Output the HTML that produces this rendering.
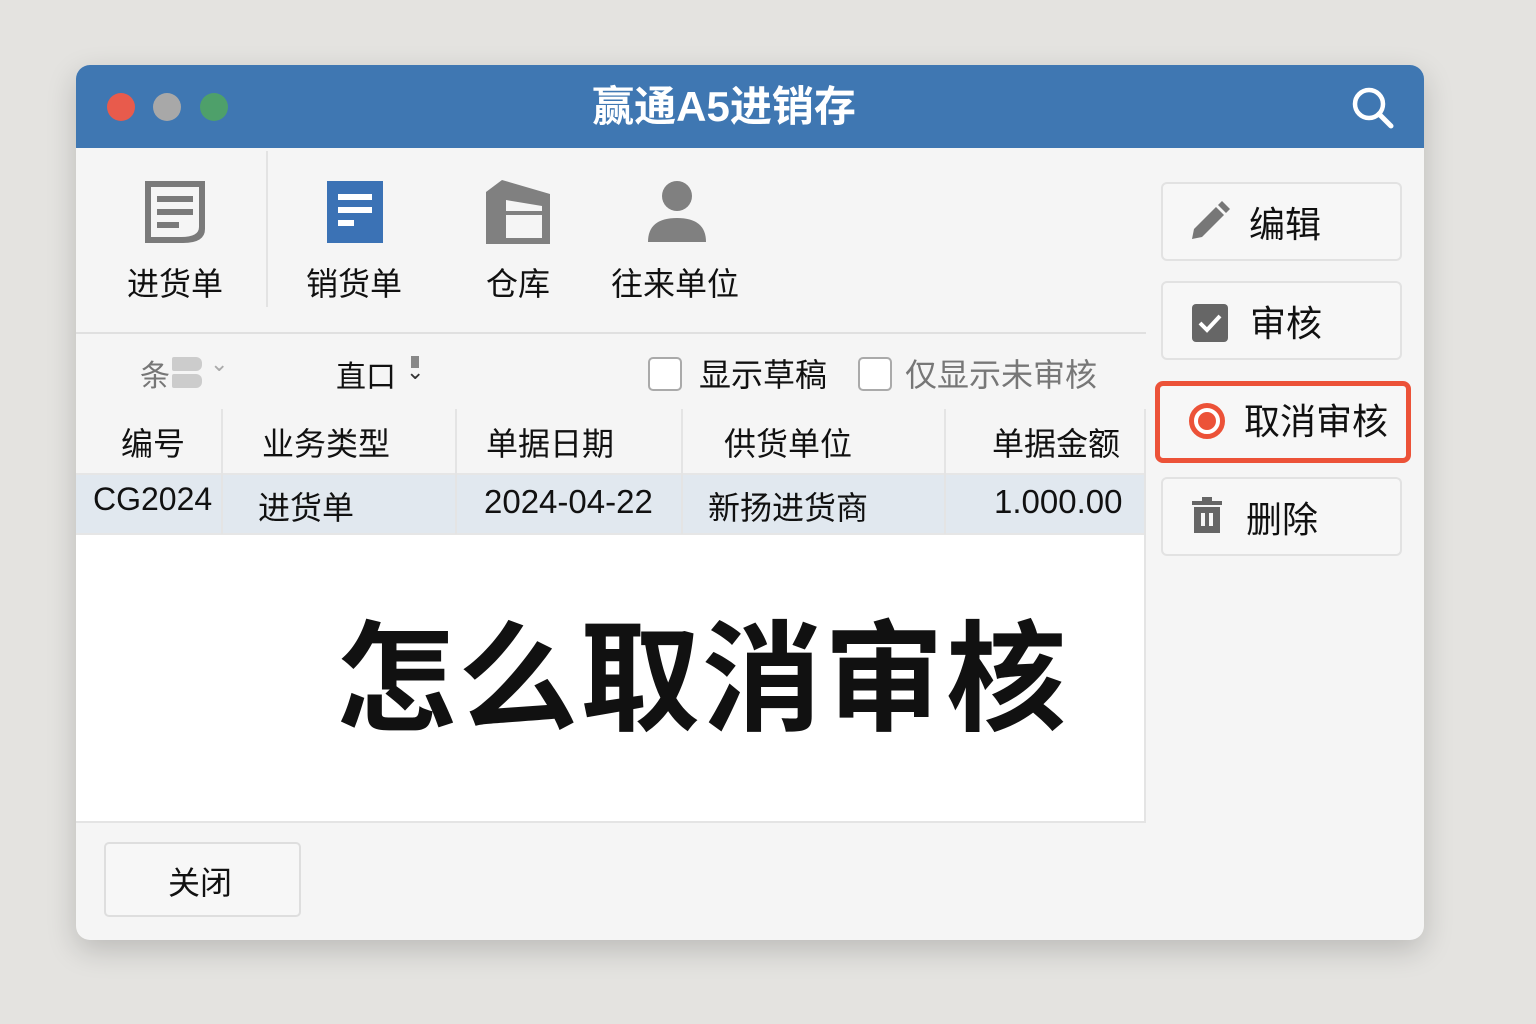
<!DOCTYPE html>
<html><head><meta charset="utf-8"><style>
*{margin:0;padding:0;box-sizing:border-box}
body{width:1536px;height:1024px;background:#e4e3e0;font-family:"Liberation Sans","Noto Sans CJK SC",sans-serif;position:relative;overflow:hidden;color:#111}
.abs{position:absolute}
.win{left:76px;top:65px;width:1348px;height:875px;background:#f5f5f5;border-radius:14px;overflow:hidden;box-shadow:0 10px 30px rgba(0,0,0,.18)}
.title{left:0;top:0;width:1348px;height:83px;background:#3f77b2}
.dot{width:28px;height:28px;border-radius:50%;top:28px}
.t{white-space:nowrap;margin-top:-4px}
.btn{left:1085px;width:241px;height:79px;background:#f7f7f7;border:2px solid #e2e2e2;border-radius:6px}
.cell{top:0;height:125px;border-right:2px solid #e4e4e4}
.chk{width:34px;height:34px;border:2px solid #aaa;border-radius:5px;background:#fff}
</style></head><body>
<div class="abs win">
 <div class="abs title">
  <div class="abs dot" style="left:31px;background:#e85b4c"></div>
  <div class="abs dot" style="left:77px;background:#a8a8a8"></div>
  <div class="abs dot" style="left:124px;background:#4ea06a"></div>
  <div class="abs t" style="left:0;width:1296px;text-align:center;top:12px;font-size:42px;font-weight:bold;color:#fff">赢通A5进销存</div>
  <svg class="abs" style="left:1274px;top:20px" width="46" height="46" viewBox="0 0 46 46"><circle cx="19" cy="19" r="14" fill="none" stroke="#fff" stroke-width="4.5"/><line x1="29" y1="29" x2="41" y2="41" stroke="#fff" stroke-width="5" stroke-linecap="round"/></svg>
 </div>
 <div class="abs" style="left:190px;top:86px;width:2px;height:156px;background:#e3e3e3"></div>
 <div class="abs" style="left:0;top:267px;width:1070px;height:2px;background:#e0e0e0"></div>
 <svg class="abs" style="left:67px;top:114px" width="64" height="68" viewBox="0 0 64 68"><path d="M2 2H62V50Q62 64 40 64H2Z" fill="#7a7a7a"/><path d="M8 8H56V48Q56 58 38 58H8Z" fill="#f5f5f5"/><rect x="14" y="17" width="36" height="6" fill="#7a7a7a"/><rect x="14" y="30" width="36" height="6" fill="#7a7a7a"/><rect x="14" y="43" width="22" height="6" fill="#7a7a7a"/></svg>
 <div class="abs" style="left:251px;top:116px;width:56px;height:62px;background:#3b72b5"></div>
 <div class="abs" style="left:262px;top:129px;width:34px;height:6px;background:#fff"></div>
 <div class="abs" style="left:262px;top:142px;width:34px;height:6px;background:#fff"></div>
 <div class="abs" style="left:262px;top:155px;width:16px;height:6px;background:#fff"></div>
 <svg class="abs" style="left:410px;top:115px" width="66" height="64" viewBox="0 0 66 64"><path d="M0 12L16 0L64 14V64H0Z" fill="#808080"/><path d="M20 20L56 26V58H20Z" fill="#f5f5f5"/><rect x="20" y="31" width="36" height="4" fill="#808080"/></svg>
 <svg class="abs" style="left:570px;top:115px" width="62" height="64" viewBox="0 0 62 64"><circle cx="31" cy="16" r="15" fill="#808080"/><path d="M2 62Q2 38 31 38Q60 38 60 62Z" fill="#808080"/></svg>
 <div class="abs t" style="left:51px;top:198px;font-size:32px">进货单</div>
 <div class="abs t" style="left:230px;top:198px;font-size:32px">销货单</div>
 <div class="abs t" style="left:410px;top:198px;font-size:32px">仓库</div>
 <div class="abs t" style="left:535px;top:198px;font-size:32px">往来单位</div>
 <div class="abs t" style="left:64px;top:290px;font-size:30px;color:#777">条</div>
 <div class="abs" style="left:96px;top:292px;width:30px;height:14px;background:#ccc;border-radius:2px 6px 6px 2px"></div>
 <div class="abs" style="left:96px;top:309px;width:30px;height:14px;background:#ccc;border-radius:2px 6px 6px 2px"></div>
 <div class="abs t" style="left:134px;top:290px;font-size:22px;color:#aaa">⌄</div>
 <div class="abs t" style="left:260px;top:291px;font-size:30px">直口</div>
 <div class="abs" style="left:335px;top:291px;width:8px;height:12px;background:#888"></div>
 <div class="abs t" style="left:330px;top:298px;font-size:22px;color:#333">⌄</div>
 <div class="abs chk" style="left:572px;top:292px"></div>
 <div class="abs t" style="left:623px;top:289px;font-size:32px">显示草稿</div>
 <div class="abs chk" style="left:782px;top:292px"></div>
 <div class="abs t" style="left:829px;top:289px;font-size:32px;color:#777">仅显示未审核</div>
 <div class="abs" style="left:0;top:344px;width:1070px;height:414px;background:#fff;border-right:2px solid #e4e4e4;border-bottom:2px solid #e4e4e4">
  <div class="abs" style="left:0;top:0;width:1068px;height:66px;background:#f5f5f5;border-bottom:2px solid #e6e6e6"></div>
  <div class="abs" style="left:0;top:66px;width:1068px;height:60px;background:#e1e8ef;border-bottom:2px solid #e6e6e6"></div>
  <div class="abs cell" style="left:145px"></div>
  <div class="abs cell" style="left:379px"></div>
  <div class="abs cell" style="left:605px"></div>
  <div class="abs cell" style="left:868px"></div>
  <div class="abs t" style="left:45px;top:14px;font-size:32px">编号</div>
  <div class="abs t" style="left:186px;top:14px;font-size:32px">业务类型</div>
  <div class="abs t" style="left:410px;top:14px;font-size:32px">单据日期</div>
  <div class="abs t" style="left:648px;top:14px;font-size:32px">供货单位</div>
  <div class="abs t" style="left:916px;top:14px;font-size:32px">单据金额</div>
  <div class="abs t" style="left:17px;top:76px;font-size:32px">CG2024</div>
  <div class="abs t" style="left:182px;top:78px;font-size:32px">进货单</div>
  <div class="abs t" style="left:408px;top:78px;font-size:33px">2024-04-22</div>
  <div class="abs t" style="left:632px;top:78px;font-size:32px">新扬进货商</div>
  <div class="abs t" style="left:918px;top:78px;font-size:33px">1.000.00</div>
  <div class="abs" style="left:260px;top:173px;font-size:120px;font-weight:bold;letter-spacing:2px;white-space:nowrap">怎么取消审核</div>
 </div>
 <div class="abs btn" style="top:117px"></div>
 <svg class="abs" style="left:1112px;top:136px" width="42" height="42" viewBox="0 0 42 42"><path d="M4 38L6 28L28 6L36 14L14 36Z" fill="#777"/><path d="M30 4L34 0L42 8L38 12Z" fill="#777"/></svg>
 <div class="abs t" style="left:1173px;top:135px;font-size:36px">编辑</div>
 <div class="abs btn" style="top:216px"></div>
 <div class="abs" style="left:1116px;top:239px;width:36px;height:38px;background:#666;border-radius:4px"></div>
 <svg class="abs" style="left:1116px;top:239px" width="36" height="38"><path d="M8 19L15 26L28 12" fill="none" stroke="#fff" stroke-width="4"/></svg>
 <div class="abs t" style="left:1174px;top:234px;font-size:36px">审核</div>
 <div class="abs" style="left:1079px;top:316px;width:256px;height:82px;border:5px solid #ec5238;border-radius:8px;background:#f7f7f7"></div>
 <div class="abs" style="left:1113px;top:338px;width:36px;height:36px;border-radius:50%;border:5px solid #ec5238;background:#fff"></div>
 <div class="abs" style="left:1122px;top:347px;width:18px;height:18px;border-radius:50%;background:#ec5238"></div>
 <div class="abs t" style="left:1168px;top:332px;font-size:36px">取消审核</div>
 <div class="abs btn" style="top:412px"></div>
 <svg class="abs" style="left:1116px;top:432px" width="30" height="38" viewBox="0 0 30 38"><rect x="0" y="4" width="30" height="4" fill="#666"/><rect x="10" y="0" width="10" height="4" fill="#666"/><path d="M2 10H28V36H2Z" fill="#666"/><rect x="9" y="16" width="4" height="13" fill="#f7f7f7"/><rect x="17" y="16" width="4" height="13" fill="#f7f7f7"/></svg>
 <div class="abs t" style="left:1170px;top:430px;font-size:36px">删除</div>
 <div class="abs" style="left:28px;top:777px;width:197px;height:75px;background:#f7f7f7;border:2px solid #dedede;border-radius:5px"></div>
 <div class="abs t" style="left:92px;top:797px;font-size:32px">关闭</div>
</div>
</body></html>
